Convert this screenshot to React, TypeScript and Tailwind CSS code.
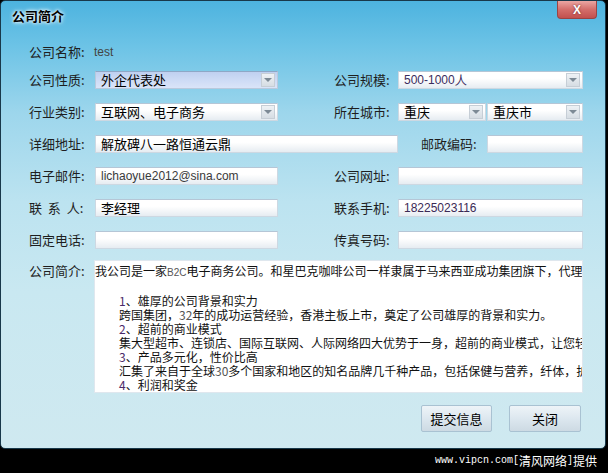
import React from "react";

const font = "font-['Noto_Sans_CJK_SC','Noto_Sans',sans-serif]";

function Arrow() {
  return (
    <div className="ml-auto mr-[2px] w-[14px] h-[14px] flex items-center justify-center border border-[#c6ced6] bg-[linear-gradient(180deg,#eef2f5_0%,#d6dde3_100%)]">
      <div className="w-0 h-0 border-l-[4px] border-r-[4px] border-t-[4px] border-l-transparent border-r-transparent border-t-[#7d8a95]" />
    </div>
  );
}

function Field({ className, children }: { className: string; children?: React.ReactNode }) {
  return (
    <div
      className={`h-[18px] flex items-center pl-[5px] border border-[#cdd8e2] border-t-[#b5c6d6] bg-[linear-gradient(180deg,#ffffff_0%,#ffffff_40%,#e6ecf1_100%)] overflow-hidden whitespace-nowrap ${className}`}
    >
      {children}
    </div>
  );
}

function Label({ className, children }: { className: string; children: React.ReactNode }) {
  return <div className={`text-[13px] leading-[18px] text-[#1e1e1e] whitespace-nowrap ${className}`}>{children}</div>;
}

export default function App() {
  return (
    <div className={`w-[608px] h-[473px] bg-black flex flex-col ${font}`}>
      <div className="w-[606px] h-[449px] rounded-[5px] border border-[#18384a] bg-[linear-gradient(180deg,#4db3df_0%,#6cc3e6_10%,#9dd6ec_25%,#bce3f0_45%,#c9e8f1_65%,#cfe9f0_100%)] flex flex-col">
        {/* title bar */}
        <div className="h-[33px] flex items-start">
          <div className="pl-[11px] pt-[7px] text-[13px] leading-[16px] font-bold text-black [text-shadow:0_0_3px_#fff,0_0_5px_#fff]">
            公司简介
          </div>
          <div className="ml-auto mr-[8px] mt-0 w-[40px] h-[18px] rounded-b-[4px] border border-[#9a4444] border-t-0 bg-[linear-gradient(180deg,#eba6a3_0%,#d46e6b_50%,#c2504e_100%)] flex items-center justify-center text-white text-[12px] font-bold font-['Liberation_Sans',sans-serif] [text-shadow:0_0_2px_#6b2020]">
            X
          </div>
        </div>

        <div className="flex flex-col pl-[28px]">
          {/* company name */}
          <div className="flex items-center h-[18px] mt-[9px]">
            <Label className="w-[65px]">公司名称:</Label>
            <div className="text-[12px] text-[#444] font-['Liberation_Sans',sans-serif]">test</div>
          </div>

          <div className="flex flex-col gap-[14px] mt-[10px]">
            {/* nature / size */}
            <div className="flex items-center">
              <Label className="w-[66px]">公司性质:</Label>
              <div className="w-[183px] h-[18px] flex items-center pl-[5px] border border-[#b9c9dc] border-t-[#8ea7c6] bg-[linear-gradient(180deg,#bfd0f0_0%,#cddbf5_50%,#dae4f8_100%)]">
                <span className="text-[13px] text-black">外企代表处</span>
                <Arrow />
              </div>
              <Label className="ml-[56px] w-[64px]">公司规模:</Label>
              <Field className="w-[185px]">
                <span className="text-[12px] text-[#3b2d5e] font-['Liberation_Sans',sans-serif]">500-1000人</span>
                <Arrow />
              </Field>
            </div>

            {/* industry / city */}
            <div className="flex items-center">
              <Label className="w-[66px]">行业类别:</Label>
              <Field className="w-[183px]">
                <span className="text-[13px] text-black">互联网、电子商务</span>
                <Arrow />
              </Field>
              <Label className="ml-[56px] w-[64px]">所在城市:</Label>
              <Field className="w-[88px]">
                <span className="text-[13px] text-black">重庆</span>
                <Arrow />
              </Field>
              <Field className="w-[96px] ml-[1px]">
                <span className="text-[13px] text-black">重庆市</span>
                <Arrow />
              </Field>
            </div>

            {/* address / zip */}
            <div className="flex items-center">
              <Label className="w-[66px]">详细地址:</Label>
              <Field className="w-[303px]">
                <span className="text-[13px] text-black">解放碑八一路恒通云鼎</span>
              </Field>
              <Label className="ml-[23px] w-[66px]">邮政编码:</Label>
              <Field className="w-[96px]" />
            </div>

            {/* email / website */}
            <div className="flex items-center">
              <Label className="w-[66px]">电子邮件:</Label>
              <Field className="w-[183px]">
                <span className="text-[12px] text-[#3a3a3a] font-['Liberation_Sans',sans-serif]">lichaoyue2012@sina.com</span>
              </Field>
              <Label className="ml-[56px] w-[64px]">公司网址:</Label>
              <Field className="w-[185px]" />
            </div>

            {/* contact / mobile */}
            <div className="flex items-center">
              <Label className="w-[66px]">联&nbsp;&nbsp;系&nbsp;&nbsp;人:</Label>
              <Field className="w-[183px]">
                <span className="text-[13px] text-black">李经理</span>
              </Field>
              <Label className="ml-[56px] w-[64px]">联系手机:</Label>
              <Field className="w-[185px]">
                <span className="text-[12px] text-[#3b2a55] font-['Liberation_Sans',sans-serif]">18225023116</span>
              </Field>
            </div>

            {/* phone / fax */}
            <div className="flex items-center">
              <Label className="w-[66px]">固定电话:</Label>
              <Field className="w-[183px]" />
              <Label className="ml-[56px] w-[64px]">传真号码:</Label>
              <Field className="w-[185px]" />
            </div>
          </div>

          {/* description */}
          <div className="flex items-start mt-[11px]">
            <Label className="w-[65px] mt-[2px]">公司简介:</Label>
            <div className="w-[489px] h-[133px] bg-white border border-[#dfe7ee] pt-[3px] overflow-hidden text-[12px] leading-[14px] text-[#111] whitespace-nowrap">
              <div>我公司是一家<span className="text-[#555] font-['Liberation_Sans',sans-serif] text-[10px]">B2C</span>电子商务公司。和星巴克咖啡公司一样隶属于马来西亚成功集团旗下，代理</div>
              <div className="h-[14px]" />
              <div className="pl-[24px] flex flex-col">
                <div><span className="text-[#4a2a6a]">1</span>、雄厚的公司背景和实力</div>
                <div>跨国集团，<span className="text-[#555]">32</span>年的成功运营经验，香港主板上市，奠定了公司雄厚的背景和实力。</div>
                <div><span className="text-[#4a2a6a]">2</span>、超前的商业模式</div>
                <div>集大型超市、连锁店、国际互联网、人际网络四大优势于一身，超前的商业模式，让您轻松</div>
                <div><span className="text-[#4a2a6a]">3</span>、产品多元化，性价比高</div>
                <div>汇集了来自于全球<span className="text-[#555]">30</span>多个国家和地区的知名品牌几千种产品，包括保健与营养，纤体，护肤</div>
                <div><span className="text-[#4a2a6a]">4</span>、利润和奖金</div>
              </div>
            </div>
          </div>

          {/* buttons */}
          <div className="flex justify-end gap-[17px] mt-[12px] pr-[24px]">
            <button className="w-[71px] h-[27px] rounded-[2px] border border-[#a9c2d2] bg-[linear-gradient(180deg,#eef4f8_0%,#dbe6ee_55%,#cddae3_100%)] text-[13px] text-black">
              提交信息
            </button>
            <button className="w-[72px] h-[27px] rounded-[2px] border border-[#a9c2d2] bg-[linear-gradient(180deg,#eef4f8_0%,#dbe6ee_55%,#cddae3_100%)] text-[13px] text-black">
              关闭
            </button>
          </div>
        </div>
      </div>

      <div className="flex justify-end pr-[11px] pt-[4px] text-white text-[10px] leading-[16px] font-['Liberation_Mono','Noto_Sans_CJK_SC',monospace]">
        www.vipcn.com[<span className="text-[12px] font-['Noto_Sans_CJK_SC',sans-serif]">清风网络</span>]<span className="text-[12px] font-['Noto_Sans_CJK_SC',sans-serif]">提供</span>
      </div>
    </div>
  );
}
